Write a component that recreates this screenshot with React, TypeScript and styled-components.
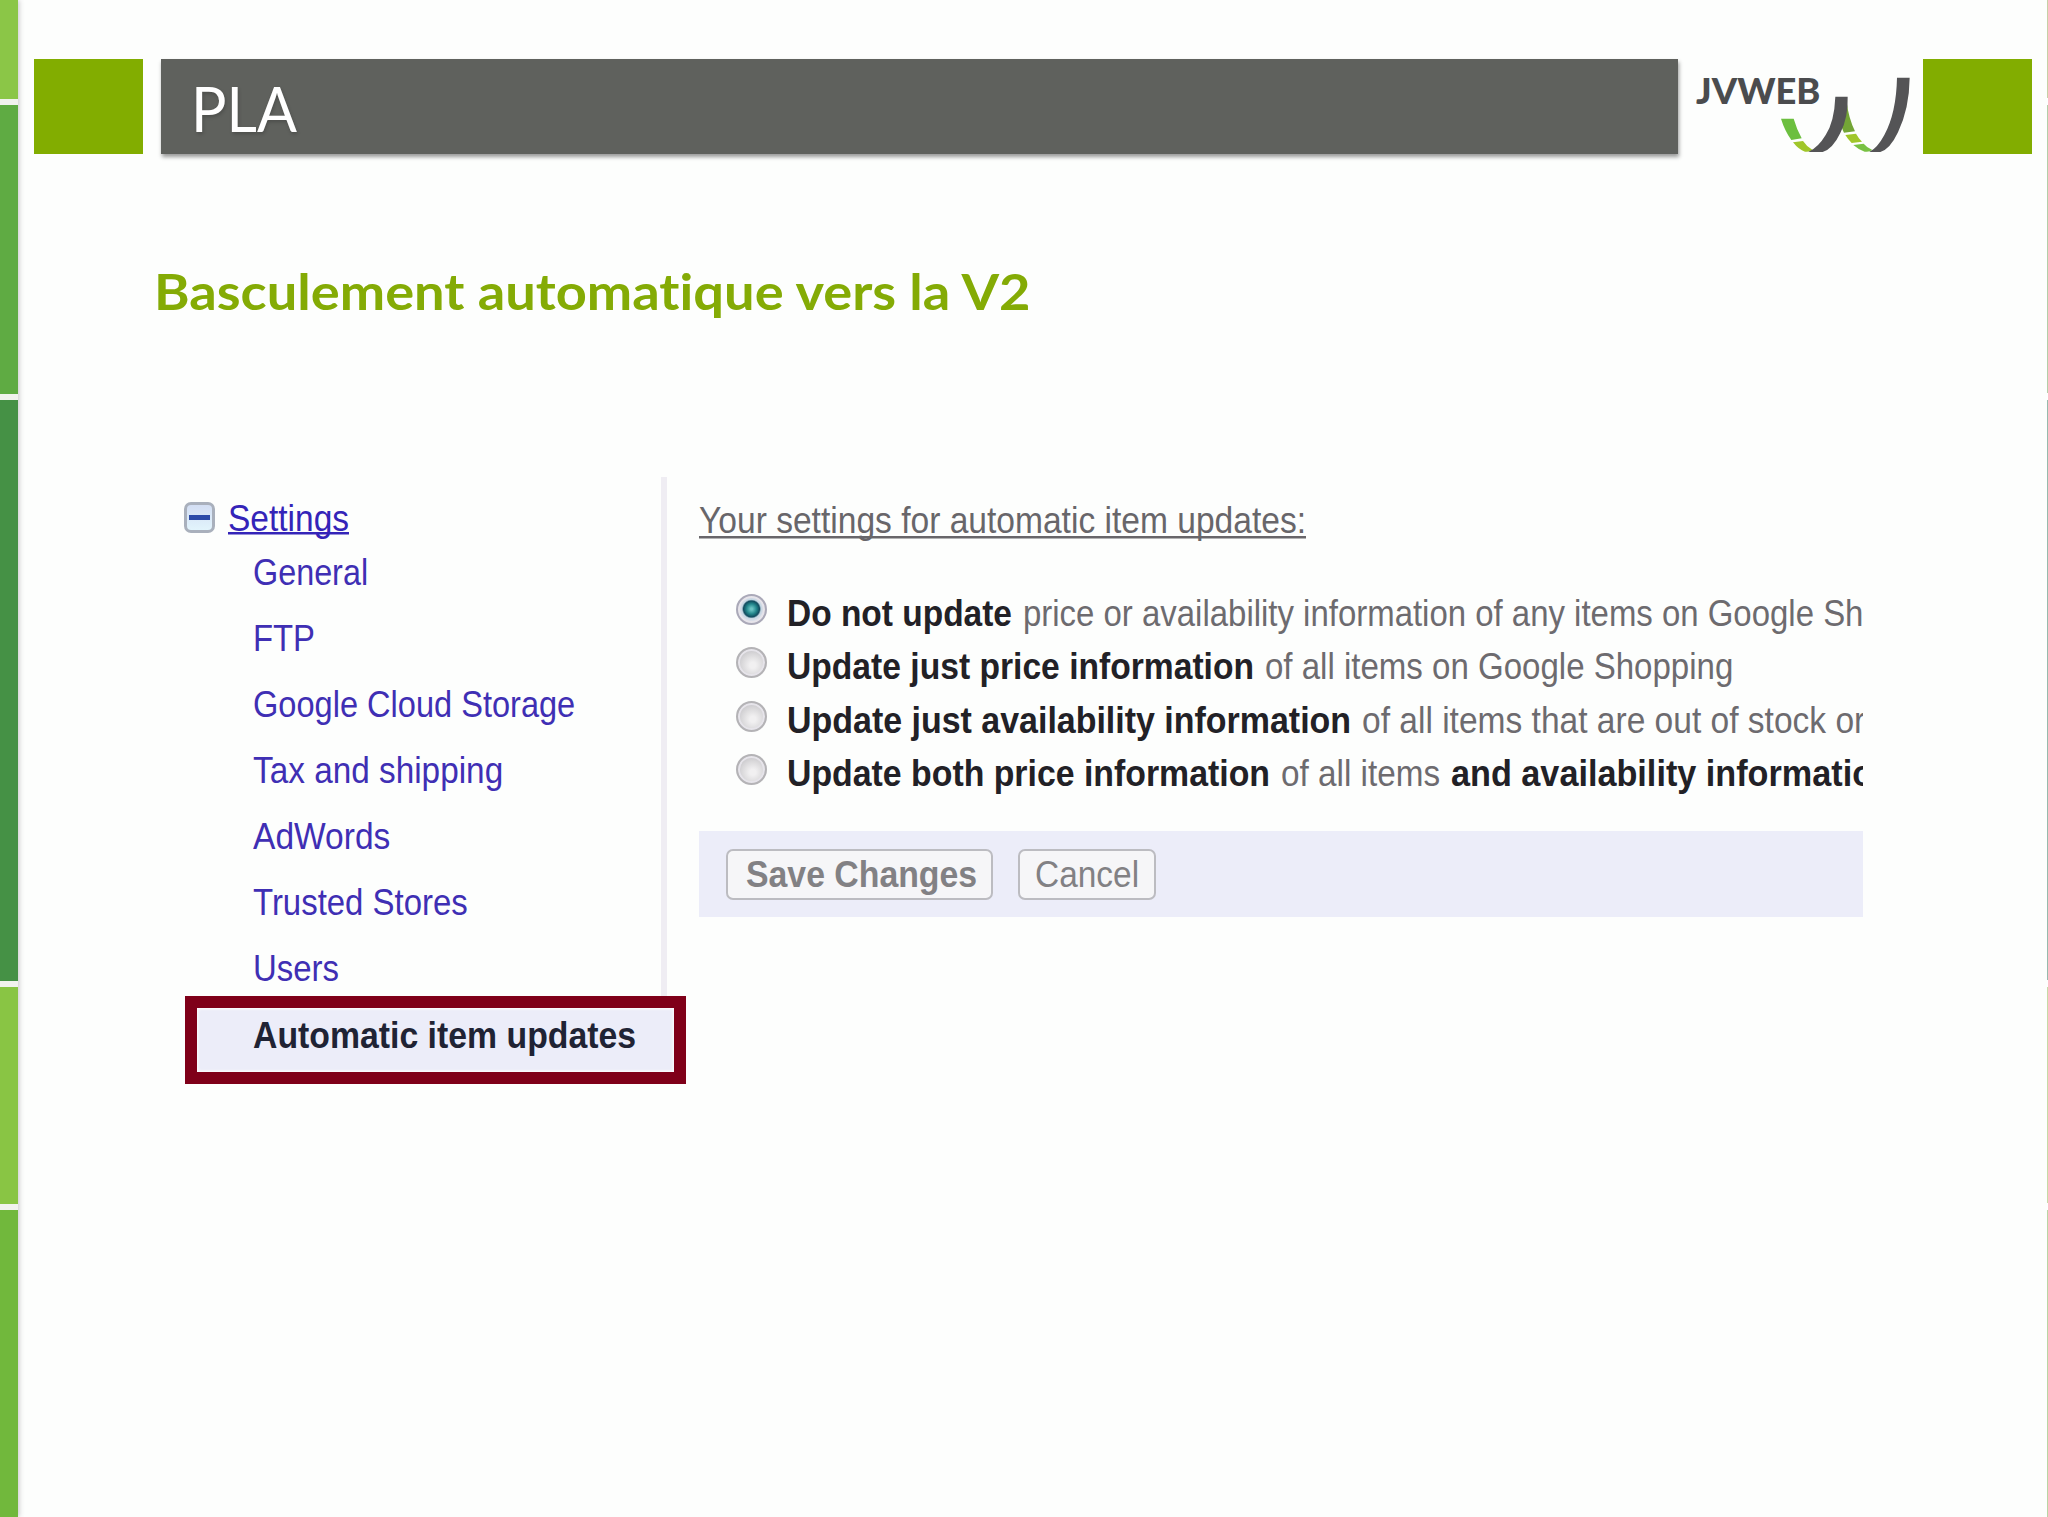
import React, { useLayoutEffect, useRef, useState } from "react";
import styled, { createGlobalStyle } from "styled-components";

const Global = createGlobalStyle`
  * { box-sizing: border-box; }
  html, body { margin: 0; padding: 0; background: #fdfefd; }
`;

const Slide = styled.div`
  display: flex;
  width: 2048px;
  height: 1517px;
  overflow: hidden;
  background: #fdfefd;
`;

const Rail = styled.div`
  flex: none;
  display: flex;
  flex-direction: column;
  gap: 6.5px;
  width: 18px;
  height: 1517px;
  background: #f1f2ee;
  box-shadow: 1px 0 5px rgba(70, 60, 70, 0.3);
`;

const RailPart = styled.div<{ $h: number; $color: string }>`
  flex: none;
  height: ${(p) => p.$h}px;
  background: ${(p) => p.$color};
`;

const Main = styled.main`
  flex: none;
  display: flex;
  flex-direction: column;
  width: 2029px;
  padding-top: 59px;
`;

const EdgeLine = styled.div`
  flex: none;
  width: 1px;
  height: 1517px;
  background: linear-gradient(#c6d1a6 0 98px, #fdfefd 98px 105px, #b3cfa8 105px 393px, #fdfefd 393px 400px, #97bbac 400px 980px, #fdfefd 980px 987px, #c6dba6 987px 1203px, #fdfefd 1203px 1210px, #b9d6a4 1210px);
`;

const Header = styled.header`
  display: flex;
  height: 95px;
  padding-left: 16px;
`;

const GreenBlock = styled.div`
  flex: none;
  width: 109px;
  height: 95px;
  background: #82ad00;
`;

const TitleBar = styled.div`
  flex: none;
  width: 1517px;
  height: 95px;
  margin-left: 18px;
  padding-left: 30px;
  background: #5f615d;
  box-shadow: 1px 3px 4px rgba(0, 0, 0, 0.4);
  color: #fff;
  font: 400 62.5px/97px Lato, Carlito, sans-serif;
  text-shadow: 1px 2px 4px rgba(0, 0, 0, 0.2);
`;

const Brand = styled.div`
  flex: none;
  display: flex;
  width: 245px;
  padding-left: 18px;
`;

const BrandName = styled.div`
  flex: none;
  width: 84px;
  margin-top: 10px;
  color: #4b4c4e;
  font: 900 36px/42px Lato, sans-serif;
`;

const Swoosh = styled.svg`
  flex: none;
  margin-top: 16px;
  width: 133px;
  height: 80px;
`;

const Subtitle = styled.h1`
  margin: 107px 0 0 136px;
  height: 60px;
  color: #84ab05;
  font: 700 50.5px/60px Lato, Carlito, sans-serif;
  font-variant-ligatures: none;
`;

const Panel = styled.section`
  display: flex;
  margin: 156px 0 0 167px;
  font-family: "Liberation Sans", Arial, sans-serif;
  font-size: 36px;
`;

const Side = styled.nav`
  flex: none;
  display: flex;
  flex-direction: column;
  width: 501px;
`;

const Tree = styled.div`
  width: 482px;
  height: 519px;
  border-right: 6px solid #efedf3;
  padding-top: 20px;
`;

const TreeHead = styled.div`
  display: flex;
  align-items: flex-start;
  height: 54px;
`;

const Toggle = styled.div`
  display: flex;
  align-items: center;
  justify-content: center;
  width: 31px;
  height: 31px;
  margin: 5px 13px 0 -1px;
  border: 3px solid #a9b0bc;
  border-radius: 7px;
  background: linear-gradient(#d3def3, #e2f4fc);

  &::before {
    content: "";
    width: 21px;
    height: 5px;
    background: #2d4ba8;
  }
`;

const Underlined = styled.div<{ $color: string; $line: number }>`
  width: fit-content;
  height: 43px;
  line-height: 44px;
  color: ${(p) => p.$color};
  background: linear-gradient(currentColor, currentColor) 0 ${(p) => p.$line}px / 100% 2.5px no-repeat;
`;

const Item = styled.div`
  height: 66px;
  padding-left: 68px;
  line-height: 44px;
  color: #3f2fb4;
`;

const Current = styled.div`
  width: 501px;
  height: 88px;
  padding: 6px 0 0 56px;
  border: 12px solid #7f0019;
  background: #ecedf9;
  box-shadow: inset 0 0 3px 1px #fff;
  color: #202334;
  font-weight: 700;
  line-height: 43px;
`;

const Content = styled.div`
  flex: none;
  width: 1164px;
  margin-left: 13px;
  padding-top: 22px;
  overflow: hidden;
`;

const Options = styled.div`
  display: flex;
  flex-direction: column;
  margin-top: 49px;
`;

const Option = styled.label`
  display: flex;
  height: 53.33px;
  padding-left: 37px;
  line-height: 45px;
  white-space: nowrap;
`;

const Radio = styled.span<{ $on: boolean }>`
  flex: none;
  width: 31px;
  height: 31px;
  margin: 3px 20px 0 0;
  border: 2px solid ${(p) => (p.$on ? "#aaa9b8" : "#b4b3b6")};
  border-radius: 50%;
  box-shadow: inset 0 0 0 2px #e6e4ea;
  background: ${(p) =>
    p.$on
      ? "radial-gradient(circle at 50% 48%, #6cc4c4 0 1px, #23878c 5px, #104b5e 8px, #c5d6e2 9.5px, #e4e3ec 13px)"
      : "radial-gradient(circle at 55% 60%, #f1f0f1 0 3px, #d9d8da 11px, #cfced1 14px)"};
`;

const Run = styled.span<{ $bold?: boolean }>`
  flex: none;
  margin-right: 11px;
  color: ${(p) => (p.$bold ? "#222126" : "#6d6b6f")};
  font-weight: ${(p) => (p.$bold ? 700 : 400)};
`;

const Actions = styled.div`
  display: flex;
  gap: 25px;
  height: 86px;
  margin-top: 27px;
  padding: 18px 0 0 27px;
  background: #ecedf9;
`;

const Button = styled.button<{ $w: number; $bold?: boolean }>`
  width: ${(p) => p.$w}px;
  height: 51px;
  padding: 0 0 0 ${(p) => (p.$bold ? 18 : 15)}px;
  border: 2.5px solid #bcbcc1;
  border-radius: 7px;
  background: #f6f6f8;
  color: #828184;
  text-align: left;
  font: ${(p) => (p.$bold ? 700 : 400)} 36px/46px "Liberation Sans", Arial, sans-serif;
`;

const FitBox = styled.span<{ $w: number }>`
  display: block;
  width: ${(p) => p.$w}px;
  height: 1lh;
  white-space: nowrap;
`;

const FitInk = styled.span`
  display: inline-block;
  transform-origin: 0 50%;
`;

/* Condenses a text run horizontally so that it spans a given width. */
function Fit({ w, children }: { w: number; children: React.ReactNode }) {
  const ink = useRef<HTMLSpanElement>(null);
  const [scale, setScale] = useState(1);
  useLayoutEffect(() => {
    if (ink.current) setScale(w / ink.current.offsetWidth);
  }, [w, children]);
  return (
    <FitBox $w={w}>
      <FitInk ref={ink} style={{ transform: `scaleX(${scale})` }}>
        {children}
      </FitInk>
    </FitBox>
  );
}

const rail = [
  { h: 98.5, color: "#8bc647" },
  { h: 288.5, color: "#5fab43" },
  { h: 580.5, color: "#459145" },
  { h: 216.5, color: "#89c544" },
  { h: 307, color: "#71b83c" },
];

const items = [
  { label: "General", w: 115 },
  { label: "FTP", w: 62 },
  { label: "Google Cloud Storage", w: 322 },
  { label: "Tax and shipping", w: 250 },
  { label: "AdWords", w: 137 },
  { label: "Trusted Stores", w: 215 },
  { label: "Users", w: 86 },
];

type Part = { text: string; w: number; bold?: boolean };

const options: Part[][] = [
  [
    { text: "Do not update", w: 225, bold: true },
    { text: "price or availability information of any items on Google Sh", w: 840 },
  ],
  [
    { text: "Update just price information", w: 467, bold: true },
    { text: "of all items on Google Shopping", w: 468 },
  ],
  [
    { text: "Update just availability information", w: 564, bold: true },
    { text: "of all items that are out of stock or", w: 503 },
  ],
  [
    { text: "Update both price information", w: 483, bold: true },
    { text: "of all items", w: 159 },
    { text: "and availability informatio", w: 422, bold: true },
  ],
];

export default function App() {
  return (
    <>
      <Global />
      <Slide>
        <Rail>
          {rail.map((r) => (
            <RailPart key={r.color} $h={r.h} $color={r.color} />
          ))}
        </Rail>
        <Main>
          <Header>
            <GreenBlock />
            <TitleBar>
              <Fit w={106}>PLA</Fit>
            </TitleBar>
            <Brand>
              <BrandName>
                <Fit w={124}>JVWEB</Fit>
              </BrandName>
              <Swoosh viewBox="360 105 399 240">
                <path d="M363 236H401Q411 270 425 295L394 300Q374 272 363 236Z" fill="#6cbf3f" />
                <path d="M399 307L429 303Q440 320 458 330Q449 337 435 335Q416 329 399 307Z" fill="#a0c62a" />
                <path d="M560 186Q566 235 585 274L552 278Q547 268 545 260Z" fill="#73a536" />
                <path d="M556 285L588 281Q595 294 606 305L575 309Q564 298 556 285Z" fill="#a0c62a" />
                <path d="M580 315L611 311Q620 322 637 330Q629 337 614 335Q597 330 580 315Z" fill="#78c143" />
                <path d="M526 170H563Q565 232 541 279Q518 327 488 336H445Q475 322 497 285Q523 245 526 170Z" fill="#545456" />
                <path d="M711 113H749Q748 205 714 277Q690 328 661 336H628Q653 323 673 285Q709 218 711 113Z" fill="#545456" />
              </Swoosh>
            </Brand>
            <GreenBlock />
          </Header>
          <Subtitle>
            <Fit w={876}>Basculement automatique vers la V2</Fit>
          </Subtitle>
          <Panel>
            <Side>
              <Tree>
                <TreeHead>
                  <Toggle />
                  <Underlined $color="#3424b8" $line={35}>
                    <Fit w={121}>Settings</Fit>
                  </Underlined>
                </TreeHead>
                {items.map((i) => (
                  <Item key={i.label}>
                    <Fit w={i.w}>{i.label}</Fit>
                  </Item>
                ))}
              </Tree>
              <Current>
                <Fit w={383}>Automatic item updates</Fit>
              </Current>
            </Side>
            <Content>
              <Underlined $color="#68666a" $line={37}>
                <Fit w={607}>Your settings for automatic item updates:</Fit>
              </Underlined>
              <Options>
                {options.map((parts, n) => (
                  <Option key={n}>
                    <Radio $on={n === 0} />
                    {parts.map((p) => (
                      <Run key={p.text} $bold={p.bold}>
                        <Fit w={p.w}>{p.text}</Fit>
                      </Run>
                    ))}
                  </Option>
                ))}
              </Options>
              <Actions>
                <Button $w={267} $bold>
                  <Fit w={231}>Save Changes</Fit>
                </Button>
                <Button $w={138}>
                  <Fit w={104}>Cancel</Fit>
                </Button>
              </Actions>
            </Content>
          </Panel>
        </Main>
        <EdgeLine />
      </Slide>
    </>
  );
}
